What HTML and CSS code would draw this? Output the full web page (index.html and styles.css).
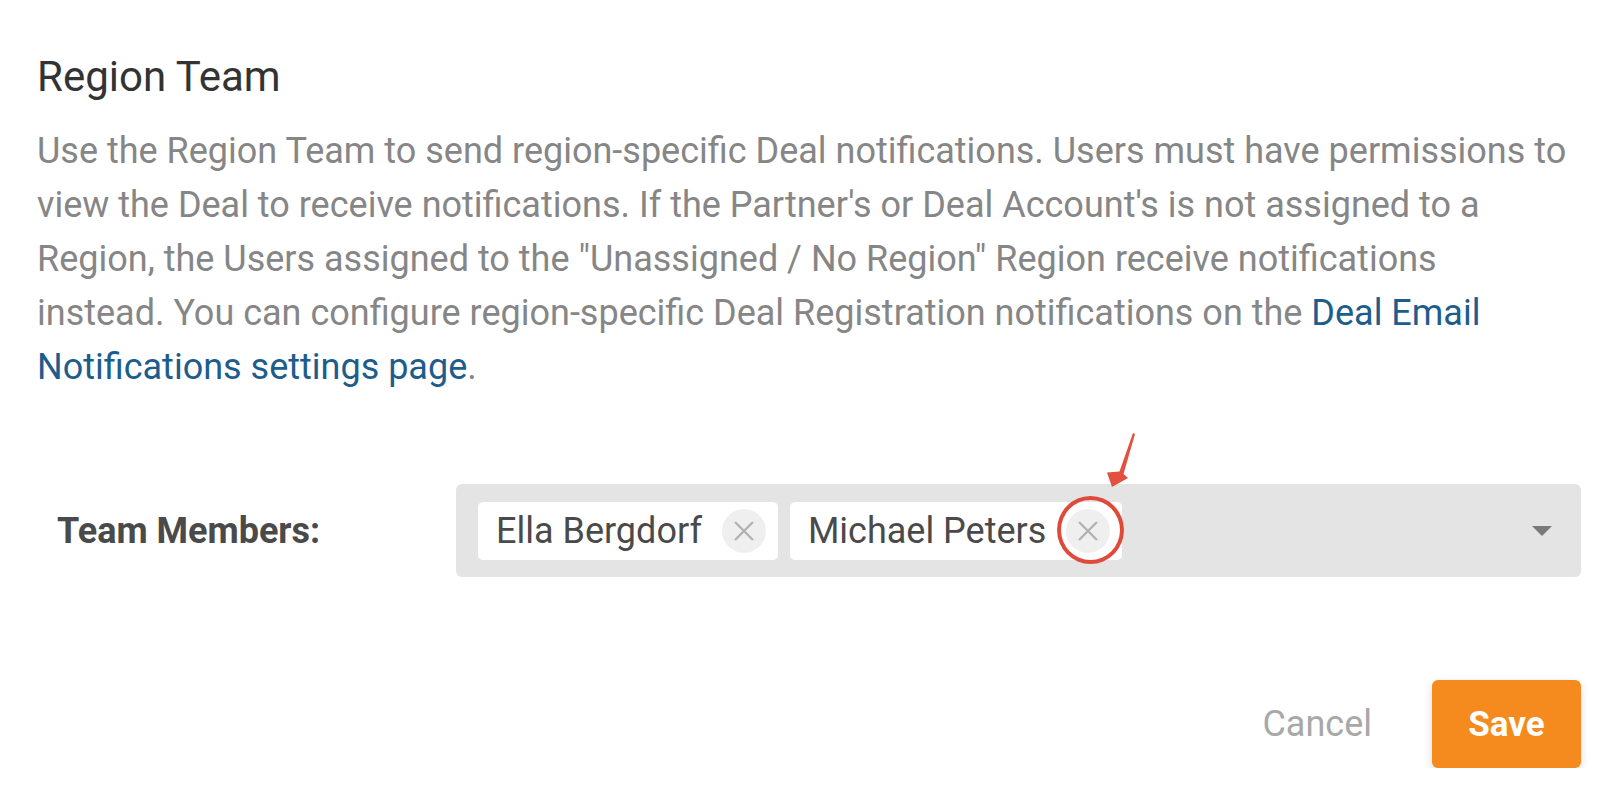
FILE: index.html
```html
<!DOCTYPE html>
<html lang="en">
<head>
<meta charset="utf-8">
<title>Region Team</title>
<link rel="stylesheet" href="styles.css">
</head>
<body>
<div class="panel">
  <h2 class="title">Region Team</h2>
  <p class="desc">Use the Region Team to send region-specific Deal notifications. Users must have permissions to view the Deal to receive notifications. If the Partner's or Deal Account's is not assigned to a Region, the Users assigned to the "Unassigned / No Region" Region receive notifications instead. You can configure region-specific Deal Registration notifications on the <a class="link" href="#">Deal Email Notifications settings page</a>.</p>

  <div class="field-row">
    <label class="field-label">Team Members:</label>
    <div class="select">
      <div class="chips">
        <span class="chip">Ella Bergdorf<span class="chip-x"><svg viewBox="0 0 22 22" width="22" height="22"><path d="M2 2L20 20M20 2L2 20" stroke="#b2b2b2" stroke-width="2.3" fill="none"/></svg></span></span>
        <span class="chip">Michael Peters<span class="chip-x"><svg viewBox="0 0 22 22" width="22" height="22"><path d="M2 2L20 20M20 2L2 20" stroke="#b2b2b2" stroke-width="2.3" fill="none"/></svg><span class="ring"></span><svg class="arrow" viewBox="0 0 32 58" width="32" height="58"><path d="M29 2 L31 3 L19.5 43 L24 47 L8 56 L3 41.5 L15.5 40.5 Z" fill="#e4503f"/></svg></span></span>
      </div>
      <span class="caret"></span>
    </div>
  </div>

  <div class="actions">
    <button class="btn-cancel" type="button">Cancel</button>
    <button class="btn-save" type="button">Save</button>
  </div>
</div>
</body>
</html>
```
FILE: styles.css
```css
html, body {
  margin: 0;
  padding: 0;
  background: #ffffff;
}

body {
  font-family: Roboto, "Liberation Sans", Arial, sans-serif;
}

.panel {
  width: 1544px;
  padding: 50px 36px 0 37px;
}

.title {
  margin: 0;
  font-size: 42px;
  font-weight: 400;
  line-height: 54px;
  color: #333333;
}

.desc {
  width: 1532px;
  margin: 20px 0 0 0;
  font-size: 36px;
  line-height: 54px;
  color: #868686;
}

.link {
  color: #1d5d8c;
  text-decoration: none;
}

.field-row {
  display: flex;
  align-items: center;
  margin-top: 90px;
  padding-left: 20px;
}

.field-label {
  width: 399px;
  font-size: 36px;
  font-weight: 700;
  color: #4a4a4a;
}

.select {
  flex: 1;
  display: flex;
  align-items: center;
  height: 93px;
  padding: 0 22px;
  background: #e4e4e4;
  border-radius: 6px;
  box-sizing: border-box;
}

.chips {
  display: flex;
  gap: 12px;
  flex: 1;
}

.chip {
  display: inline-flex;
  align-items: center;
  height: 58px;
  padding: 0 12px 0 18px;
  background: #ffffff;
  border-radius: 5px;
  font-size: 36px;
  color: #4a4a4a;
}

.chip-x {
  position: relative;
  display: inline-flex;
  align-items: center;
  justify-content: center;
  width: 44px;
  height: 44px;
  margin-left: 20px;
  border-radius: 50%;
  background: #efefef;
}

.ring {
  position: absolute;
  left: -9px;
  top: -13px;
  width: 59px;
  height: 60px;
  border: 4px solid #e04a3b;
  border-radius: 50%;
}

.arrow {
  position: absolute;
  left: 38px;
  top: -78px;
}

.caret {
  width: 0;
  height: 0;
  border-left: 10px solid transparent;
  border-right: 10px solid transparent;
  border-top: 10px solid #7a7a7a;
  margin-right: 7px;
}

.actions {
  display: flex;
  justify-content: flex-end;
  align-items: center;
  gap: 50px;
  margin-top: 103px;
}

.btn-cancel {
  border: none;
  background: none;
  padding: 0 10px;
  font-family: inherit;
  font-size: 36px;
  color: #a8a8a8;
  cursor: pointer;
}

.btn-save {
  width: 149px;
  height: 88px;
  border: none;
  border-radius: 6px;
  background: #f58a1f;
  color: #ffffff;
  font-family: inherit;
  font-size: 35px;
  font-weight: 700;
  box-shadow: 0 3px 8px rgba(0, 0, 0, 0.15);
  cursor: pointer;
}
```
